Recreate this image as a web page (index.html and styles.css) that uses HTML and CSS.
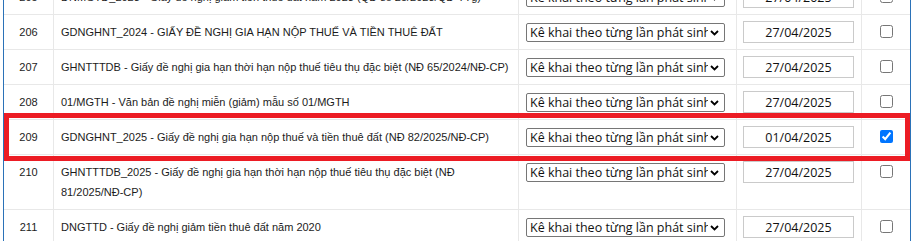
FILE: index.html
```html
<!DOCTYPE html>
<html lang="vi">
<head>
<meta charset="utf-8">
<title>Danh sách tờ khai</title>
<link rel="stylesheet" href="styles.css">
</head>
<body>
<div class="panel">
  <table class="grid">
    <colgroup>
      <col class="c-no"><col class="c-name"><col class="c-type"><col class="c-date"><col class="c-check">
    </colgroup>
    <tbody>
      <tr>
        <td class="no">205</td>
        <td class="name">DNMGTD_2023 - Giấy đề nghị giảm tiền thuê đất năm 2023 (QĐ số 25/2023/QĐ-TTg)</td>
        <td class="type"><select class="kind"><option>Kê khai theo từng lần phát sinh</option></select></td>
        <td class="date"><input class="day" type="text" value="27/04/2025"></td>
        <td class="check"><input type="checkbox"></td>
      </tr>
      <tr>
        <td class="no">206</td>
        <td class="name">GDNGHNT_2024 - GIẤY ĐỀ NGHỊ GIA HẠN NỘP THUẾ VÀ TIỀN THUÊ ĐẤT</td>
        <td class="type"><select class="kind"><option>Kê khai theo từng lần phát sinh</option></select></td>
        <td class="date"><input class="day" type="text" value="27/04/2025"></td>
        <td class="check"><input type="checkbox"></td>
      </tr>
      <tr>
        <td class="no">207</td>
        <td class="name">GHNTTTDB - Giấy đề nghị gia hạn thời hạn nộp thuế tiêu thụ đặc biệt (NĐ 65/2024/NĐ-CP)</td>
        <td class="type"><select class="kind"><option>Kê khai theo từng lần phát sinh</option></select></td>
        <td class="date"><input class="day" type="text" value="27/04/2025"></td>
        <td class="check"><input type="checkbox"></td>
      </tr>
      <tr>
        <td class="no">208</td>
        <td class="name">01/MGTH - Văn bản đề nghị miễn (giảm) mẫu số 01/MGTH</td>
        <td class="type"><select class="kind"><option>Kê khai theo từng lần phát sinh</option></select></td>
        <td class="date"><input class="day" type="text" value="27/04/2025"></td>
        <td class="check"><input type="checkbox"></td>
      </tr>
      <tr>
        <td class="no">209</td>
        <td class="name">GDNGHNT_2025 - Giấy đề nghị gia hạn nộp thuế và tiền thuê đất (NĐ 82/2025/NĐ-CP)</td>
        <td class="type"><select class="kind"><option>Kê khai theo từng lần phát sinh</option></select></td>
        <td class="date"><input class="day" type="text" value="01/04/2025"></td>
        <td class="check"><input type="checkbox" checked></td>
      </tr>
      <tr>
        <td class="no">210</td>
        <td class="name">GHNTTTDB_2025 - Giấy đề nghị gia hạn thời hạn nộp thuế tiêu thụ đặc biệt (NĐ 81/2025/NĐ-CP)</td>
        <td class="type"><select class="kind"><option>Kê khai theo từng lần phát sinh</option></select></td>
        <td class="date"><input class="day" type="text" value="27/04/2025"></td>
        <td class="check"><input type="checkbox"></td>
      </tr>
      <tr>
        <td class="no">211</td>
        <td class="name">DNGTTD - Giấy đề nghị giảm tiền thuê đất năm 2020</td>
        <td class="type"><select class="kind"><option>Kê khai theo từng lần phát sinh</option></select></td>
        <td class="date"><input class="day" type="text" value="27/04/2025"></td>
        <td class="check"><input type="checkbox"></td>
      </tr>
    </tbody>
  </table>
</div>
<div class="highlight"></div>
</body>
</html>
```

FILE: styles.css
```css
html, body {
  margin: 0;
  padding: 0;
  background: #ffffff;
}

body {
  position: relative;
  width: 913px;
  height: 241px;
  overflow: hidden;
  font-family: "Liberation Sans", Arial, sans-serif;
  font-size: 11px;
  color: #1c1c1c;
}

.panel {
  margin-left: 3px;
  width: 906px;
  height: 241px;
  border-left: 1px solid #2b72b8;
  border-right: 1px solid #2b72b8;
  overflow: hidden;
}

.grid {
  width: 906px;
  margin-top: -20px;
  table-layout: fixed;
  border-collapse: separate;
  border-spacing: 0;
}

.c-no { width: 50px; }
.c-name { width: 465px; }
.c-type { width: 218px; }
.c-date { width: 125px; }
.c-check { width: 48px; }

.grid td {
  padding: 7px 7px;
  line-height: 20px;
  vertical-align: top;
  border-right: 1px solid #e8e8e8;
  border-bottom: 1px solid #e8e8e8;
}

.grid td.check {
  border-right: none;
  text-align: center;
  padding: 7px 0;
}

.grid td.no {
  text-align: center;
  padding: 7px 2px;
}

.grid td.date {
  padding: 7px 8px 7px 6px;
}

.kind {
  display: block;
  box-sizing: border-box;
  width: 199px;
  height: 19px;
  margin: 1px 0 0;
  padding: 0 16px 0 3px;
  border: 1px solid #767676;
  border-radius: 2px;
  -webkit-appearance: none;
  appearance: none;
  background: #ffffff url("data:image/svg+xml,%3Csvg xmlns='http://www.w3.org/2000/svg' width='9' height='6' viewBox='0 0 9 6'%3E%3Cpath d='M1 1l3.5 3.5L8 1' fill='none' stroke='%23000' stroke-width='1.8'/%3E%3C/svg%3E") no-repeat right 5px center;
  font-family: "Open Sans", "Noto Sans", sans-serif;
  font-size: 12.5px;
  line-height: 17px;
  color: #111111;
  overflow: hidden;
}

.day {
  display: block;
  box-sizing: border-box;
  width: 111px;
  height: 22px;
  margin: -1px 0;
  padding: 0 4px;
  border: 1px solid #cacaca;
  border-radius: 0;
  background: #ffffff;
  font-family: "Open Sans", "Noto Sans", sans-serif;
  font-size: 12.5px;
  color: #111111;
  text-align: center;
  outline: none;
}

.check input {
  width: 13px;
  height: 13px;
  margin: 3px 0 0;
  vertical-align: top;
}

.highlight {
  position: absolute;
  left: 4px;
  top: 113px;
  width: 906px;
  height: 48px;
  box-sizing: border-box;
  border: 5px solid #ec1c24;
  pointer-events: none;
}
```
